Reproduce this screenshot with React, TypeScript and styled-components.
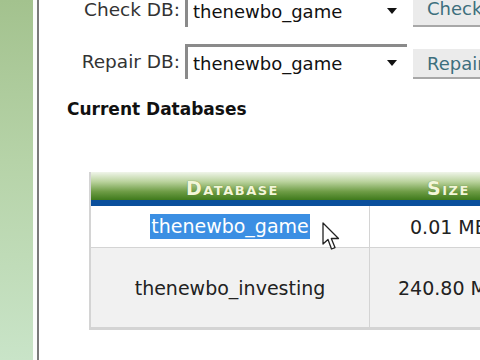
import React from 'react'
import styled, { createGlobalStyle } from 'styled-components'

const GlobalStyle = createGlobalStyle`
  html, body {
    margin: 0;
    padding: 0;
    background: #ffffff;
  }
  body {
    font-family: 'DejaVu Sans', Verdana, sans-serif;
    color: #222222;
  }
`

const Page = styled.div`
  display: flex;
  width: 480px;
  height: 360px;
  overflow: hidden;
  background: #ffffff;
`

const SideBar = styled.div`
  width: 33px;
  flex-shrink: 0;
  background: linear-gradient(to bottom, #a3c28e 0%, #b6d3a8 45%, #c9e4c8 100%);
`

const Gutter = styled.div`
  width: 4px;
  flex-shrink: 0;
  background: #fbfdfb;
  border-right: 2px solid #7a7a7a;
`

const Content = styled.div`
  flex: 1;
  position: relative;
  padding-left: 29px;
  margin-top: -8px;
`

const FormRow = styled.div`
  display: flex;
  align-items: center;
  height: 35px;
  margin-bottom: 17px;
`

const Label = styled.div`
  width: 117px;
  padding-right: 5px;
  box-sizing: border-box;
  text-align: right;
  font-size: 18.5px;
  color: #333333;
  white-space: nowrap;
`

const Select = styled.div`
  width: 222px;
  height: 35px;
  flex-shrink: 0;
  display: flex;
  align-items: center;
  justify-content: space-between;
  box-sizing: border-box;
  padding: 0 10px 0 5px;
  background: #ffffff;
  border-left: 3px solid #8a8a8a;
  border-top: 3px solid #8a8a8a;
  font-size: 18px;
  color: #111111;
`

const Arrow = styled.span`
  width: 0;
  height: 0;
  border-left: 5px solid transparent;
  border-right: 5px solid transparent;
  border-top: 6px solid #111111;
`

const Button = styled.div<{ $top?: number }>`
  margin-left: 6px;
  margin-top: ${({ $top }) => $top ?? 0}px;
  align-self: stretch;
  padding: 0 14px;
  display: flex;
  align-items: center;
  background: #ebebeb;
  border-bottom: 2px solid #a8a8a8;
  font-size: 18px;
  color: #3d6f7d;
  white-space: nowrap;
`

const Heading = styled.div`
  margin-left: -1px;
  margin-top: 20px;
  font-size: 17px;
  font-weight: bold;
  color: #111111;
  white-space: nowrap;
`

const Table = styled.div`
  margin-top: 53px;
  margin-left: 21px;
  width: 420px;
  border-left: 2px solid #d4d4d4;
  border-bottom: 2px solid #d4d4d4;
`

const HeaderRow = styled.div`
  display: grid;
  grid-template-columns: 279px 1fr;
  height: 28px;
  background: linear-gradient(to bottom, #f0f5ea 0%, #b9d29c 35%, #6e9c45 70%, #3f7a1c 100%);
  border-bottom: 6px solid #0b4f9c;
`

const HeaderCell = styled.div<{ $shift?: number }>`
  display: flex;
  align-items: flex-end;
  justify-content: center;
  padding-bottom: 1px;
  padding-left: ${({ $shift }) => $shift ?? 0}px;
  font-size: 19px;
  font-weight: bold;
  font-variant: small-caps;
  letter-spacing: 1.5px;
  color: #f2f6d8;
  text-shadow: 0 0 1px #5a7a30;
`

const BodyRow = styled.div<{ $height: number; $shade?: boolean }>`
  display: grid;
  grid-template-columns: 279px 1fr;
  height: ${({ $height }) => $height}px;
  background: ${({ $shade }) => ($shade ? '#f1f1f1' : '#ffffff')};
  border-bottom: 1px solid #d4d4d4;
`

const Cell = styled.div`
  display: flex;
  align-items: center;
  justify-content: center;
  font-size: 19px;
  color: #222222;
  border-right: 1px solid #d4d4d4;
  white-space: nowrap;
`

const SizeCell = styled.div<{ $indent: number }>`
  display: flex;
  align-items: center;
  padding-left: ${({ $indent }) => $indent}px;
  font-size: 19px;
  color: #222222;
  white-space: nowrap;
`

const Selected = styled.span`
  background: #3b8fe3;
  color: #ffffff;
  padding: 1px 1px 2px;
`

const Cursor = styled.svg`
  position: absolute;
  left: 283px;
  top: 230px;
`

const App: React.FC = () => (
  <>
    <GlobalStyle />
    <Page>
      <SideBar />
      <Gutter />
      <Content>
        <FormRow>
          <Label>Check DB:</Label>
          <Select>
            <span>thenewbo_game</span>
            <Arrow />
          </Select>
          <Button>Check</Button>
        </FormRow>
        <FormRow>
          <Label>Repair DB:</Label>
          <Select>
            <span>thenewbo_game</span>
            <Arrow />
          </Select>
          <Button $top={5}>Repair</Button>
        </FormRow>
        <Heading>Current Databases</Heading>
        <Table>
          <HeaderRow>
            <HeaderCell $shift={4}>Database</HeaderCell>
            <HeaderCell $shift={16}>Size</HeaderCell>
          </HeaderRow>
          <BodyRow $height={41}>
            <Cell>
              <Selected>thenewbo_game</Selected>
            </Cell>
            <SizeCell $indent={40}>0.01 MB</SizeCell>
          </BodyRow>
          <BodyRow $height={79} $shade>
            <Cell>thenewbo_investing</Cell>
            <SizeCell $indent={28}>240.80 MB</SizeCell>
          </BodyRow>
        </Table>
        <Cursor width="20" height="30" viewBox="0 0 20 30">
          <path
            d="M1 1 L1 22 L6 17.5 L9.5 27 L13 25.6 L9.3 16.5 L16.5 16.5 Z"
            fill="#ffffff"
            stroke="#222222"
            strokeWidth="1.3"
            strokeLinejoin="round"
          />
        </Cursor>
      </Content>
    </Page>
  </>
)

export default App
